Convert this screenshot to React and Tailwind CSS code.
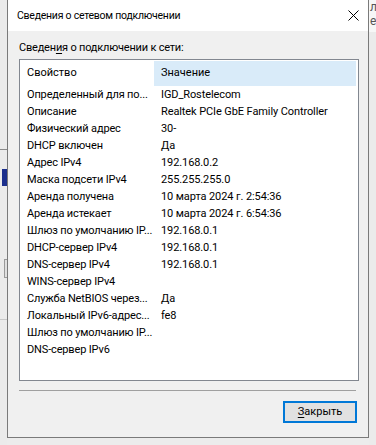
import React from 'react';

const rows = [
  ['Определенный для по...', 'IGD_Rostelecom'],
  ['Описание', 'Realtek PCIe GbE Family Controller'],
  ['Физический адрес', '30-'],
  ['DHCP включен', 'Да'],
  ['Адрес IPv4', '192.168.0.2'],
  ['Маска подсети IPv4', '255.255.255.0'],
  ['Аренда получена', '10 марта 2024 г. 2:54:36'],
  ['Аренда истекает', '10 марта 2024 г. 6:54:36'],
  ['Шлюз по умолчанию IP...', '192.168.0.1'],
  ['DHCP-сервер IPv4', '192.168.0.1'],
  ['DNS-сервер IPv4', '192.168.0.1'],
  ['WINS-сервер IPv4', ''],
  ['Служба NetBIOS через...', 'Да'],
  ['Локальный IPv6-адрес...', 'fe8'],
  ['Шлюз по умолчанию IP...', ''],
  ['DNS-сервер IPv6', ''],
];

const App = () => {
  return (
    <div className="flex w-[376px] h-[445px] overflow-hidden bg-[#ececec] font-['Roboto','Liberation_Sans',sans-serif] text-[11px] text-black">
      {/* desktop strip on the left */}
      <div className="w-[7px] shrink-0 flex flex-col bg-[#ebebeb]">
        <div className="h-[149px]" />
        <div className="h-px bg-[#8a8a8a]" />
        <div className="h-[19px]" />
        <div className="h-[17px] w-[5px] ml-[2px] bg-[#1b2f8c]" />
        <div className="h-[73px]" />
        <div className="h-[19px] w-[4px] ml-[4px] border border-[#9a9a9a] bg-[#e0e0e0]" />
        <div className="h-[41px]" />
        <div className="h-px bg-[#c8c8c8]" />
      </div>

      {/* dialog window */}
      <div className="w-[362px] h-[438px] shrink-0 flex flex-col border-x border-b border-[#7a7a7a] bg-[#f0f0f0]">
        {/* title bar */}
        <div className="h-[31px] shrink-0 flex items-center justify-between bg-white pl-[9px] pr-[9px]">
          <span className="text-[10.5px] tracking-[-0.25px]">Сведения о сетевом подключении</span>
          <svg width="11" height="11" viewBox="0 0 11 11" className="mb-[1px]">
            <path d="M0.5 0.5L10.5 10.5M10.5 0.5L0.5 10.5" stroke="#000" strokeWidth="1" />
          </svg>
        </div>

        {/* content */}
        <div className="flex flex-col px-[11px] pt-[9px]">
          <div className="h-[16px] leading-[16px] tracking-[-0.2px]">
            Сведен<span className="underline underline-offset-2">и</span>я о подключении к сети:
          </div>

          <div className="mt-[3px] w-[340px] h-[322px] border border-[#828790] bg-white flex flex-col">
            <div className="flex h-[26px] shrink-0">
              <div className="w-[134px] pl-[7px] flex items-center">Свойство</div>
              <div className="w-[202px] mt-[1px] pl-[7px] flex items-center bg-[#d9ebf9]">Значение</div>
            </div>
            {rows.map(([name, value], i) => (
              <div key={i} className="flex h-[17px] leading-[17px]">
                <div className="w-[134px] pl-[7px] whitespace-nowrap tracking-[-0.15px]">{name}</div>
                <div className="flex-1 pl-[7px] whitespace-nowrap overflow-hidden tracking-[-0.1px]">{value}</div>
              </div>
            ))}
          </div>

          <div className="mt-[9px] w-[337px] h-px bg-[#a0a0a0]" />

          <div className="mt-[10px] flex justify-end">
            <button className="w-[74px] h-[22px] border-2 border-[#0078d7] bg-[#e1e1e1] flex items-center justify-center">
              <span>
                <span className="underline underline-offset-2">З</span>акрыть
              </span>
            </button>
          </div>
        </div>
      </div>

      {/* desktop strip on the right */}
      <div className="w-[8px] shrink-0 flex flex-col bg-[#ebebeb]">
        <div className="h-[32px] bg-[#f7f7f7] text-[12px] leading-[14px] text-[#555] whitespace-nowrap overflow-hidden pl-[1px]">
          <div>л</div>
          <div>et</div>
        </div>
      </div>
    </div>
  );
};

export default App;
